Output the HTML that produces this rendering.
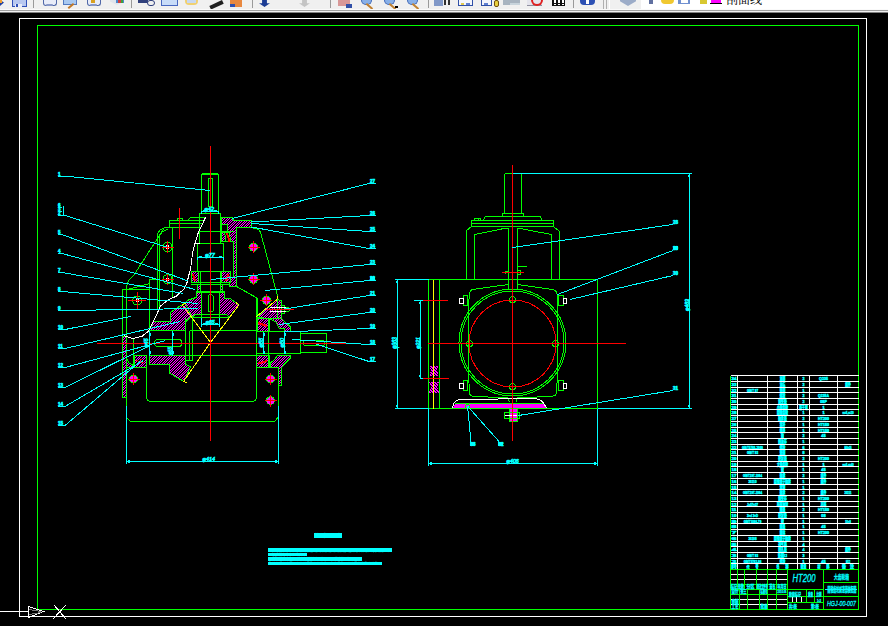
<!DOCTYPE html>
<html lang="zh"><head><meta charset="utf-8"><title>CAD</title>
<style>
html,body{margin:0;padding:0;background:#000;}
body{width:888px;height:626px;overflow:hidden;position:relative;font-family:"Liberation Sans","Noto Sans CJK SC",sans-serif;}
#tb{position:absolute;left:0;top:0;width:888px;height:13px;background:#f0f0f0;overflow:hidden;}
#tb .w{position:absolute;left:641px;top:0;width:247px;height:9px;background:#fff;}
#tb .l1{position:absolute;left:0;top:9px;width:888px;height:1px;background:#fafafa;}
#tb .l2{position:absolute;left:0;top:10px;width:888px;height:1px;background:#a0a0a0;}
#tb .l3{position:absolute;left:0;top:11px;width:888px;height:1px;background:#f0f0f0;}
#tb .l4{position:absolute;left:0;top:12px;width:888px;height:1px;background:#808080;}
#tb .lay{position:absolute;left:726px;top:-7px;font-size:12px;line-height:14px;color:#000;font-family:"Liberation Sans","Noto Serif CJK SC",serif;white-space:nowrap;}
#tb i{position:absolute;display:block;}
svg{position:absolute;left:0;top:0;}
svg text{font-family:"Liberation Sans","Noto Sans CJK SC",sans-serif;}
</style></head><body>
<svg width="888" height="626" viewBox="0 0 888 626" fill="none" stroke-width="1" shape-rendering="crispEdges">
<defs>
<pattern id="h1" width="5" height="5" patternUnits="userSpaceOnUse"><rect width="5" height="5" fill="#000"/><g fill="#ff00ff"><rect x="0" y="0" width="1" height="1"/><rect x="0" y="2" width="1" height="1"/><rect x="1" y="1" width="1" height="1"/><rect x="1" y="4" width="1" height="1"/><rect x="2" y="0" width="1" height="1"/><rect x="2" y="3" width="1" height="1"/><rect x="3" y="2" width="1" height="1"/><rect x="3" y="4" width="1" height="1"/><rect x="4" y="1" width="1" height="1"/><rect x="4" y="3" width="1" height="1"/></g></pattern>
<pattern id="h2" width="3" height="3" patternUnits="userSpaceOnUse"><rect width="3" height="3" fill="#ff00ff"/><rect x="0" y="0" width="1" height="1" fill="#000"/><rect x="1" y="1" width="1" height="1" fill="#000"/><rect x="2" y="2" width="1" height="1" fill="#000"/></pattern>
</defs>
<rect x="19.5" y="18.5" width="847" height="597.5" stroke="#ffffff"/>
<rect x="37.5" y="25.5" width="821" height="584" stroke="#00ff00"/>
<g stroke="#fff">
<line x1="0" y1="611.5" x2="28" y2="611.5"/>
<path d="M28.5 606.5 L43.5 611.5 L28.5 617.5 Z"/>
<line x1="29" y1="609.5" x2="41" y2="611.5" stroke="#777"/>
<line x1="29" y1="614.5" x2="41" y2="612.5" stroke="#777"/>
<line x1="54" y1="605" x2="66" y2="619"/>
<line x1="66" y1="605" x2="53" y2="619"/>
</g>
<g fill="#00ffff" stroke="none">
<rect x="314" y="533" width="28" height="5"/>
<rect x="268" y="548" width="124" height="4"/>
<rect x="268" y="553" width="39" height="3"/>
<rect x="268" y="557" width="94" height="4"/>
<rect x="268" y="562" width="114" height="3"/>
</g>
<text x="328" y="537.2" font-size="4.4" fill="#00ffff" stroke="#00ffff" stroke-width="0" text-anchor="middle" textLength="26">技术要求</text>
<text x="269" y="551.7" font-size="3.3" fill="#00ffff" stroke="#00ffff" stroke-width="0" text-anchor="start" textLength="122">1.装配前所有零件用煤油清洗，滚动轴承用汽油清洗，箱体内不许有任何杂物存在。</text>
<text x="269" y="555.5" font-size="2.6" fill="#00ffff" stroke="#00ffff" stroke-width="0" text-anchor="start" textLength="37">2.啮合侧隙不小于0.16mm。</text>
<text x="269" y="560.4" font-size="3.3" fill="#00ffff" stroke="#00ffff" stroke-width="0" text-anchor="start" textLength="92">3.用涂色法检验斑点，按齿高接触斑点不小于40%，按齿长不小于50%。</text>
<text x="269" y="564.2" font-size="2.6" fill="#00ffff" stroke="#00ffff" stroke-width="0" text-anchor="start" textLength="112">4.减速器剖分面、各接触面及密封处均不允许漏油，剖分面允许涂密封胶。</text>
<g stroke="#00ff00" fill="url(#h1)">
<path d="M221 217.5 L232 217.5 L233.5 220.5 L251.5 220.5 L251.5 227.5 L236.5 227.5 L236.5 286.5 L229 286.5 L229 277.5 L233.5 277.5 L233.5 241.5 L221 241.5 Z"/>
<rect x="191" y="271.5" width="7" height="10.5"/>
<rect x="221" y="271.5" width="9" height="10.5"/>
<rect x="197.5" y="284" width="2.5" height="7"/>
<rect x="220" y="284" width="2.5" height="7"/>
<path d="M219.5 292.5 L224.5 292.5 L224.5 298.5 L230 298.5 L239 305 L229 317.5 L226.5 314.5 L219.5 314.5 Z"/>
<path d="M201 292.5 L196 292.5 L196 297.5 L188.5 300 L182.5 305 L192 317.5 L195 314.5 L201 314.5 Z"/>
<path d="M149.5 330.5 L153.5 321 L170 321 L170 312.8 L178 307.4 L185 303 L191.5 316 L185.5 322 L185.5 330.5 Z"/>
<path d="M149.5 355.5 L185 355.5 L185 363.7 L190.5 367 L184 381.5 L169.5 373.2 L169.5 364.2 L149.5 364.2 Z"/>
<rect x="122.5" y="336" width="4" height="61"/>
<rect x="134.5" y="355.5" width="12" height="11.8"/>
<path d="M126.5 358 L129 363 L133.5 365.5 L133.5 367.3 L126.5 367.3 Z"/>
<path d="M256.5 317.5 L277 299.5 L281.5 300.5 L281.5 318.5 L290 326.5 L290 331 L284 331 L284 328 L279 328 L276 322 L269 318.5 Z"/>
<rect x="256.5" y="318.5" width="12.5" height="13"/>
<rect x="256.5" y="355.5" width="12.5" height="12"/>
<path d="M270 363.5 L274 360 L278 355 L290 355 L290 358.5 L281.5 367.3 L281.5 385.5 L278 385.5 L278 367.3 L270 367.3 Z"/>
</g>
<g stroke="#00ff00" fill="#000">
<rect x="221" y="224.5" width="6" height="7.5"/>
<path d="M224.5 232.5 L229.5 232.5 L230.5 241 L226 241 Z"/>
</g>
<g stroke="#ff0000">
<line x1="226.5" y1="233.5" x2="229" y2="241.5"/>
<line x1="227.5" y1="233.5" x2="230" y2="241.5"/>
<line x1="192.5" y1="274" x2="194.5" y2="281"/>
<line x1="193.5" y1="274" x2="195.5" y2="281"/>
<line x1="228" y1="274" x2="225.5" y2="281"/>
<line x1="229" y1="274" x2="226.5" y2="281"/>
<line x1="258" y1="322.5" x2="267" y2="325.5"/>
<line x1="258" y1="323.5" x2="267" y2="326.5"/>
<line x1="258" y1="363" x2="267" y2="360.5"/>
<line x1="258" y1="364" x2="267" y2="361.5"/>
<line x1="136" y1="360.5" x2="144" y2="363"/>
<line x1="140" y1="359.5" x2="141.5" y2="359.5"/>
</g>
<g stroke="#00ff00">
<path d="M201.5 212.5 L201.5 174.5 L202.5 173.5 L217.5 173.5 L218.5 174.5 L218.5 212.5"/>
<rect x="208.5" y="178" width="4" height="29" rx="2"/>
<line x1="202" y1="174.5" x2="218.5" y2="174.5"/>
<path d="M199.5 243.5 L199.5 213.5 L220.5 213.5 L220.5 243.5"/>
<line x1="199.5" y1="231.5" x2="233.5" y2="231.5"/>
<path d="M194.5 243.5 L223.5 243.5 L223.5 271.5"/>
<line x1="197.5" y1="243.5" x2="197.5" y2="271.5"/>
<line x1="193" y1="271.5" x2="230" y2="271.5"/>
<line x1="200" y1="271.5" x2="200" y2="291"/>
<line x1="220" y1="271.5" x2="220" y2="291"/>
<line x1="191" y1="282" x2="229" y2="282"/>
<line x1="191" y1="284" x2="229" y2="284"/>
<rect x="196" y="291" width="28.5" height="1.5" fill="#00ff00"/>
<line x1="201" y1="292.5" x2="201" y2="317.5"/>
<line x1="219.5" y1="292.5" x2="219.5" y2="317.5"/>
<path d="M208 311 L208 296 L210.5 294 L213 296 L213 311 L210.5 312.5 Z"/>
<line x1="195" y1="314.5" x2="226.5" y2="314.5"/>
<line x1="192" y1="317.5" x2="229" y2="317.5"/>
<path d="M205.5 217.5 L190.5 217.5 L188 220.5"/>
<path d="M204 220.5 L169.5 220.5 L169.5 227.5"/>
<line x1="169.5" y1="223.5" x2="202.5" y2="223.5"/>
<rect x="177.5" y="218.5" width="5" height="2"/>
<line x1="164.5" y1="227.5" x2="200" y2="227.5"/>
<path d="M166.5 227.5 Q158.5 228.5 157.5 235 V308.5"/>
<path d="M168.5 229.5 Q160.5 230.5 159.5 237 V308.5"/>
<line x1="172.5" y1="227.5" x2="172.5" y2="297"/>
<path d="M164.5 227.5 L134 275 Q127.5 280 126.5 287 V406"/>
<path d="M122.5 397 L122.5 289.5 L149.5 289.5"/>
<line x1="122.5" y1="397" x2="126.5" y2="397"/>
<line x1="127.5" y1="289.5" x2="149.5" y2="283.5"/>
<path d="M157.5 279.5 L149.5 279.5 L149.5 330.5"/>
<path d="M251.5 227.5 L257 229 Q260 230 261 234 L277.5 296"/>
<path d="M236.5 286.5 L257 298 L257 331"/>
<path d="M245 291 L256.5 298"/>
<line x1="189.5" y1="330.5" x2="256.5" y2="330.5"/>
<line x1="150" y1="355.5" x2="256.5" y2="355.5"/>
<line x1="185.5" y1="318" x2="185.5" y2="360"/>
<line x1="189.5" y1="330.5" x2="189.5" y2="360"/>
<line x1="192.5" y1="317.5" x2="192.5" y2="360"/>
<line x1="185.5" y1="360" x2="192.5" y2="360"/>
<rect x="149.5" y="330.5" width="35.5" height="25"/>
<rect x="154.5" y="339.5" width="27.5" height="7" rx="3.5"/>
<line x1="133.5" y1="338.5" x2="133.5" y2="367"/>
<line x1="126.5" y1="367.3" x2="146.5" y2="367.3"/>
<path d="M146.5 367.3 V396.5 Q146.5 401.5 151.5 401.5 H251.5 Q256.5 401.5 256.5 396.5 V298"/>
<path d="M126.5 406 L126.5 417.5 L130.5 421.5 L274.5 421.5 L278 417.5 L278 367.3"/>
<line x1="256.5" y1="367.3" x2="278" y2="367.3"/>
<rect x="256.5" y="331.5" width="44" height="22"/>
<line x1="268.5" y1="318.5" x2="268.5" y2="367"/>
<rect x="300.5" y="333.5" width="25.5" height="19"/>
<rect x="303" y="340.5" width="22" height="5" rx="2.5"/>
<line x1="245" y1="330.5" x2="256.5" y2="330.5"/>
<rect x="281.5" y="305" width="3" height="8"/>
<circle cx="287" cy="309.5" r="2.5"/>
<line x1="277.5" y1="300" x2="277.5" y2="318.5"/>
<line x1="256.5" y1="318.5" x2="281.5" y2="318.5"/>
</g>
<g stroke="#ffff00">
<line x1="210.5" y1="342.5" x2="182.5" y2="305"/>
<line x1="210.5" y1="342.5" x2="239" y2="305"/>
<line x1="210.5" y1="342.5" x2="183.5" y2="381.5"/>
<path d="M277.5 296 L277 299.5 L256.5 316.5"/>
<line x1="182.5" y1="305" x2="186.5" y2="302.5"/>
<line x1="239" y1="305" x2="236" y2="302.5"/>
<line x1="183.5" y1="381.5" x2="187" y2="383"/>
</g>
<g stroke="#ffffff">
<path d="M205.5 217.5 L198.5 232 L195 243 L192.7 252 L190.7 268 L187 282.5 L184.4 288.5 L176.3 296.2 L168.2 299.8 L160.5 306 L154.6 319 L148.3 331.3 L142 336.3 L133 338.5 L124 335.8"/>
<line x1="195" y1="243.5" x2="199.5" y2="243.5"/>
<line x1="269.5" y1="307.5" x2="286" y2="307.5"/>
<line x1="269.5" y1="311.5" x2="286" y2="311.5"/>
</g>
<g>
<circle cx="167.5" cy="247" r="4.5" stroke="#00ff00" fill="#000"/><circle cx="167.5" cy="247" r="1.5" stroke="#ffffff" fill="#fff"/><line x1="161.5" y1="247" x2="173.5" y2="247" stroke="#ff0000"/><line x1="167.5" y1="241" x2="167.5" y2="253" stroke="#ff0000"/>
<circle cx="167.5" cy="279.3" r="4.5" stroke="#00ff00" fill="#000"/><circle cx="167.5" cy="279.3" r="1.5" stroke="#ffffff" fill="#fff"/><line x1="161.5" y1="279.3" x2="173.5" y2="279.3" stroke="#ff0000"/><line x1="167.5" y1="273.3" x2="167.5" y2="285.3" stroke="#ff0000"/>
<circle cx="137.3" cy="300.5" r="4.5" stroke="#00ff00" fill="#000"/><circle cx="137.3" cy="300.5" r="1.5" stroke="#ffffff" fill="#fff"/><line x1="128.3" y1="300.5" x2="146.3" y2="300.5" stroke="#ff0000"/><line x1="137.3" y1="291.5" x2="137.3" y2="309.5" stroke="#ff0000"/>
<circle cx="253.5" cy="247.2" r="4" stroke="#00ff00" fill="#ff00ff"/><line x1="247.5" y1="247.2" x2="259.5" y2="247.2" stroke="#ff0000"/><line x1="253.5" y1="241.2" x2="253.5" y2="253.2" stroke="#ff0000"/>
<circle cx="253.5" cy="279.3" r="4" stroke="#00ff00" fill="#ff00ff"/><line x1="247.5" y1="279.3" x2="259.5" y2="279.3" stroke="#ff0000"/><line x1="253.5" y1="273.3" x2="253.5" y2="285.3" stroke="#ff0000"/>
<circle cx="266.4" cy="300.3" r="4" stroke="#00ff00" fill="#ff00ff"/><line x1="260.4" y1="300.3" x2="272.4" y2="300.3" stroke="#ff0000"/><line x1="266.4" y1="294.3" x2="266.4" y2="306.3" stroke="#ff0000"/>
<circle cx="133.5" cy="379" r="4" stroke="#00ff00" fill="#ff00ff"/><line x1="127.5" y1="379" x2="139.5" y2="379" stroke="#ff0000"/><line x1="133.5" y1="373" x2="133.5" y2="385" stroke="#ff0000"/>
<circle cx="270.5" cy="379" r="4" stroke="#00ff00" fill="#ff00ff"/><line x1="264.5" y1="379" x2="276.5" y2="379" stroke="#ff0000"/><line x1="270.5" y1="373" x2="270.5" y2="385" stroke="#ff0000"/>
<circle cx="270.5" cy="400.5" r="4" stroke="#00ff00" fill="#ff00ff"/><line x1="264.5" y1="400.5" x2="276.5" y2="400.5" stroke="#ff0000"/><line x1="270.5" y1="394.5" x2="270.5" y2="406.5" stroke="#ff0000"/>
</g>
<g stroke="#ff0000">
<line x1="210.5" y1="146" x2="210.5" y2="440.5"/>
<line x1="97" y1="343.5" x2="347" y2="343.5"/>
<line x1="179.5" y1="208" x2="179.5" y2="238.5"/>
<line x1="267" y1="309.5" x2="294" y2="309.5"/>
</g>
<g stroke="#00ffff">
<line x1="201.5" y1="211.5" x2="218.5" y2="211.5"/>
<line x1="197.5" y1="257.5" x2="223.5" y2="257.5"/>
<line x1="201" y1="324.5" x2="219.5" y2="324.5"/>
<line x1="201" y1="317.5" x2="201" y2="326"/>
<line x1="219.5" y1="317.5" x2="219.5" y2="326"/>
<line x1="149.5" y1="330.5" x2="149.5" y2="355.5"/>
<line x1="172.5" y1="330.5" x2="172.5" y2="355.5"/>
<line x1="263.5" y1="331.5" x2="263.5" y2="353.5"/>
<line x1="284.5" y1="331.5" x2="284.5" y2="353.5"/>
<line x1="126.5" y1="406" x2="126.5" y2="463.5"/>
<line x1="278" y1="406" x2="278" y2="463.5"/>
<line x1="126.5" y1="461.5" x2="278" y2="461.5"/>
<path d="M58 176.5 L69 176.5 L210 190.5"/>
<path d="M58 215.5 L65 215.5 L166.5 247"/>
<path d="M58 234.5 L62 234.5 L188 281"/>
<path d="M58 253.5 L62 253.5 L195 289.5"/>
<path d="M58 272.5 L62 272.5 L183.5 293.5"/>
<path d="M58 291.5 L62 291.5 L198 303.5"/>
<path d="M58 310.5 L62 310.5 L198 308.5"/>
<path d="M58 329.5 L65 329.5 L131 316.5"/>
<path d="M58 348.5 L65 348.5 L180 321.5"/>
<path d="M58 367.5 L65 367.5 L165.5 340.5"/>
<path d="M58 387.5 L65 387.5 L149 346"/>
<path d="M58 406.5 L65 406.5 L143.5 360.5"/>
<path d="M58 425.5 L65 425.5 L140 361.5"/>
<path d="M376 183.5 L369 183.5 L232 218.5"/>
<path d="M376 215.5 L369 215.5 L251.5 222"/>
<path d="M376 231.5 L369 231.5 L251.5 223.5"/>
<path d="M376 248.5 L369 248.5 L251.5 227"/>
<path d="M376 264.5 L369 264.5 L211 279.5"/>
<path d="M376 280.5 L369 280.5 L265 290.5"/>
<path d="M376 295.5 L369 295.5 L284.5 309"/>
<path d="M376 312.5 L369 312.5 L279 324.5"/>
<path d="M376 328.5 L369 328.5 L284 332"/>
<path d="M376 344.5 L369 344.5 L292.5 339.5"/>
<path d="M376 361.5 L369 361.5 L316 344"/>
<line x1="58" y1="207.5" x2="62" y2="207.5"/>
<line x1="58" y1="211.5" x2="62" y2="211.5"/>
<line x1="63.5" y1="206" x2="63.5" y2="215.5"/>
</g>
<text x="58" y="175.7" font-size="4.5" fill="#00ffff" stroke="#00ffff" stroke-width="0.6" text-anchor="start" font-weight="bold">1</text>
<text x="58" y="214.7" font-size="4.5" fill="#00ffff" stroke="#00ffff" stroke-width="0.6" text-anchor="start" font-weight="bold">2</text>
<text x="58" y="233.7" font-size="4.5" fill="#00ffff" stroke="#00ffff" stroke-width="0.6" text-anchor="start" font-weight="bold">5</text>
<text x="58" y="252.7" font-size="4.5" fill="#00ffff" stroke="#00ffff" stroke-width="0.6" text-anchor="start" font-weight="bold">4</text>
<text x="58" y="271.7" font-size="4.5" fill="#00ffff" stroke="#00ffff" stroke-width="0.6" text-anchor="start" font-weight="bold">7</text>
<text x="58" y="290.7" font-size="4.5" fill="#00ffff" stroke="#00ffff" stroke-width="0.6" text-anchor="start" font-weight="bold">8</text>
<text x="58" y="309.7" font-size="4.5" fill="#00ffff" stroke="#00ffff" stroke-width="0.6" text-anchor="start" font-weight="bold">9</text>
<text x="58" y="328.7" font-size="4.5" fill="#00ffff" stroke="#00ffff" stroke-width="0.6" text-anchor="start" font-weight="bold">10</text>
<text x="58" y="347.7" font-size="4.5" fill="#00ffff" stroke="#00ffff" stroke-width="0.6" text-anchor="start" font-weight="bold">11</text>
<text x="58" y="366.7" font-size="4.5" fill="#00ffff" stroke="#00ffff" stroke-width="0.6" text-anchor="start" font-weight="bold">12</text>
<text x="58" y="386.7" font-size="4.5" fill="#00ffff" stroke="#00ffff" stroke-width="0.6" text-anchor="start" font-weight="bold">13</text>
<text x="58" y="405.7" font-size="4.5" fill="#00ffff" stroke="#00ffff" stroke-width="0.6" text-anchor="start" font-weight="bold">14</text>
<text x="58" y="424.7" font-size="4.5" fill="#00ffff" stroke="#00ffff" stroke-width="0.6" text-anchor="start" font-weight="bold">15</text>
<text x="58" y="210.7" font-size="4.5" fill="#00ffff" stroke="#00ffff" stroke-width="0.6" text-anchor="start" font-weight="bold">3</text>
<text x="58" y="206.7" font-size="4.5" fill="#00ffff" stroke="#00ffff" stroke-width="0.6" text-anchor="start" font-weight="bold">6</text>
<text x="370" y="182.7" font-size="4.5" fill="#00ffff" stroke="#00ffff" stroke-width="0.6" text-anchor="start" font-weight="bold">27</text>
<text x="370" y="214.7" font-size="4.5" fill="#00ffff" stroke="#00ffff" stroke-width="0.6" text-anchor="start" font-weight="bold">26</text>
<text x="370" y="230.7" font-size="4.5" fill="#00ffff" stroke="#00ffff" stroke-width="0.6" text-anchor="start" font-weight="bold">25</text>
<text x="370" y="247.7" font-size="4.5" fill="#00ffff" stroke="#00ffff" stroke-width="0.6" text-anchor="start" font-weight="bold">24</text>
<text x="370" y="263.7" font-size="4.5" fill="#00ffff" stroke="#00ffff" stroke-width="0.6" text-anchor="start" font-weight="bold">23</text>
<text x="370" y="279.7" font-size="4.5" fill="#00ffff" stroke="#00ffff" stroke-width="0.6" text-anchor="start" font-weight="bold">22</text>
<text x="370" y="294.7" font-size="4.5" fill="#00ffff" stroke="#00ffff" stroke-width="0.6" text-anchor="start" font-weight="bold">21</text>
<text x="370" y="311.7" font-size="4.5" fill="#00ffff" stroke="#00ffff" stroke-width="0.6" text-anchor="start" font-weight="bold">20</text>
<text x="370" y="327.7" font-size="4.5" fill="#00ffff" stroke="#00ffff" stroke-width="0.6" text-anchor="start" font-weight="bold">19</text>
<text x="370" y="343.7" font-size="4.5" fill="#00ffff" stroke="#00ffff" stroke-width="0.6" text-anchor="start" font-weight="bold">18</text>
<text x="370" y="360.7" font-size="4.5" fill="#00ffff" stroke="#00ffff" stroke-width="0.6" text-anchor="start" font-weight="bold">17</text>
<text x="209.2" y="211.2" font-size="6" fill="#00ffff" stroke="#00ffff" stroke-width="0.75" text-anchor="middle" font-style="italic" lengthAdjust="spacingAndGlyphs" textLength="9.4">φ42</text>
<text x="210" y="257.1" font-size="6" fill="#00ffff" stroke="#00ffff" stroke-width="0.75" text-anchor="middle" font-style="italic" lengthAdjust="spacingAndGlyphs" textLength="9.4">φ77</text>
<text x="210.2" y="323.6" font-size="6" fill="#00ffff" stroke="#00ffff" stroke-width="0.75" text-anchor="middle" font-style="italic" lengthAdjust="spacingAndGlyphs" textLength="9">φ65</text>
<text x="208.7" y="460.6" font-size="6" fill="#00ffff" stroke="#00ffff" stroke-width="0.75" text-anchor="middle" font-style="italic" lengthAdjust="spacingAndGlyphs" textLength="12.4">φ414</text>
<text x="0" y="0" font-size="5.5" fill="#00ffff" stroke="#00ffff" stroke-width="0.75" text-anchor="middle" font-style="italic" lengthAdjust="spacingAndGlyphs" textLength="9" transform="translate(147.6,343) rotate(-90)">φ45</text>
<text x="0" y="0" font-size="5.5" fill="#00ffff" stroke="#00ffff" stroke-width="0.75" text-anchor="middle" font-style="italic" lengthAdjust="spacingAndGlyphs" textLength="7.5" transform="translate(171.8,351) rotate(-90)">φ55</text>
<text x="0" y="0" font-size="6" fill="#00ffff" stroke="#00ffff" stroke-width="0.75" text-anchor="middle" font-style="italic" lengthAdjust="spacingAndGlyphs" textLength="9.5" transform="translate(262.8,342.8) rotate(-90)">φ55</text>
<text x="0" y="0" font-size="6" fill="#00ffff" stroke="#00ffff" stroke-width="0.75" text-anchor="middle" font-style="italic" lengthAdjust="spacingAndGlyphs" textLength="9.5" transform="translate(283.8,342.8) rotate(-90)">φ50</text>
<g stroke="none" fill="#00ffff">
<rect x="203" y="210" width="3" height="1"/>
<rect x="214" y="210" width="3" height="1"/>
<rect x="201" y="211" width="1" height="3"/>
<rect x="218" y="211" width="1" height="3"/>
<rect x="199" y="256" width="3" height="1"/>
<rect x="219" y="256" width="3" height="1"/>
<rect x="197" y="257" width="1" height="3"/>
<rect x="223" y="257" width="1" height="3"/>
<rect x="203" y="323" width="3" height="1"/>
<rect x="215" y="323" width="3" height="1"/>
<rect x="201" y="324" width="1" height="3"/>
<rect x="219" y="324" width="1" height="3"/>
<rect x="150" y="333" width="1" height="3"/>
<rect x="150" y="351" width="1" height="3"/>
<rect x="173" y="333" width="1" height="3"/>
<rect x="173" y="351" width="1" height="3"/>
<rect x="264" y="333" width="1" height="3"/>
<rect x="264" y="351" width="1" height="3"/>
<rect x="285" y="333" width="1" height="3"/>
<rect x="285" y="351" width="1" height="3"/>
</g>
<rect x="370" y="277" width="5" height="4" fill="#00ffff"/>
<g stroke="none" fill="#ff00ff">
<path d="M452.5 408.5 L455 404 L543.5 404 L547 408.5 Z"/>
<rect x="509" y="408" width="8.5" height="13.5"/>
</g>
<g stroke="none" fill="url(#h2)">
<path d="M429 365.5 L439 365.5 L437 370.5 L439 376 L429 376 L431 370.5 Z"/>
<path d="M429 382 L439 382 L437 387 L439 392.5 L429 392.5 L431 387 Z"/>
</g>
<g stroke="#00ff00">
<path d="M504.5 213.5 L504.5 174.5 L505.5 173.5 L520.5 173.5 L521.5 174.5 L521.5 213.5"/>
<rect x="502.5" y="213.5" width="21" height="3"/>
<path d="M483 220.5 L485.5 216.5 L540 216.5 L542.5 220.5"/>
<path d="M474.5 220.5 L474.5 218.5 L480.5 218.5 L480.5 220.5"/>
<line x1="478.5" y1="218.5" x2="478.5" y2="220.5"/>
<rect x="471.5" y="220.5" width="82" height="6"/>
<line x1="471.5" y1="223.5" x2="553.5" y2="223.5"/>
<path d="M471.5 226.5 L466.5 230.5 L466.5 279.5"/>
<path d="M553.5 226.5 L559.5 231.5 L559.5 279.5"/>
<path d="M474.5 279.5 L474.5 234.5 L504 228.5 L508.5 228.5 L508.5 289"/>
<path d="M551.5 279.5 L551.5 234.5 L520 228.5 L517.5 228.5 L517.5 289"/>
<line x1="517.5" y1="266.5" x2="527" y2="266.5"/>
<path d="M505.5 274 L505.5 271 L508.5 271"/>
<path d="M517.5 270 L520.5 270 L520.5 274 L517.5 274"/>
<line x1="428.5" y1="279.5" x2="597.5" y2="279.5"/>
<line x1="428.5" y1="408.5" x2="597.5" y2="408.5"/>
<line x1="428.5" y1="279.5" x2="428.5" y2="408.5"/>
<line x1="439.5" y1="279.5" x2="439.5" y2="408.5"/>
<line x1="597.5" y1="279.5" x2="597.5" y2="408.5"/>
<circle cx="512.5" cy="342.5" r="53.5"/>
<circle cx="512.5" cy="342.5" r="51.5"/>
<path d="M508.5 284.5 L490 287 L473 289.5 Q470 290 469.5 293.5 L468.5 305 V373 L469.5 393 Q470 396 473.5 396.3 L507.5 398"/>
<path d="M517.5 284.5 L535 287 L552 289.5 Q556.5 290 557 293.5 L557.5 305 V373 L556.5 393 Q556 396 551.5 396.3 L517.5 398"/>
<line x1="507.5" y1="398" x2="509.5" y2="402"/>
<line x1="517.5" y1="398" x2="516" y2="402"/>
<rect x="463.5" y="295.5" width="4" height="10"/>
<rect x="463.5" y="380" width="4" height="10"/>
<rect x="558.5" y="295.5" width="4.5" height="10"/>
<rect x="558.5" y="380" width="4.5" height="10"/>
<circle cx="512.5" cy="299.5" r="3"/>
<circle cx="469.5" cy="343.5" r="3"/>
<circle cx="555.5" cy="343.5" r="3"/>
<circle cx="512.5" cy="386.5" r="3"/>
<line x1="455" y1="403.5" x2="543.5" y2="403.5"/>
<rect x="504.5" y="412.5" width="15" height="6"/>
<rect x="509" y="408.5" width="8.5" height="13"/>
<circle cx="467.5" cy="406.5" r="2"/>
</g>
<line x1="433.5" y1="279.5" x2="433.5" y2="408.5" stroke="#ffff00"/>
<g stroke="#ffffff">
<rect x="459.5" y="298" width="4" height="5"/>
<rect x="459.5" y="383" width="4" height="5"/>
<rect x="563" y="298" width="3" height="5"/>
<rect x="563" y="383" width="3" height="5"/>
<path d="M452.5 408 L454 403 Q456 399.7 460 399.7 H493 L498 399 L520 398.3 L537 399 Q541 399.5 543.5 403 L546.5 408"/>
<line x1="505" y1="415.5" x2="517" y2="415.5"/>
</g>
<g stroke="#ff0000">
<circle cx="512.5" cy="343.5" r="43.5"/>
<line x1="512.5" y1="165" x2="512.5" y2="441"/>
<line x1="428" y1="343.5" x2="626" y2="343.5"/>
<line x1="423" y1="300.5" x2="448" y2="300.5"/>
<line x1="423" y1="378.5" x2="449" y2="378.5"/>
<line x1="502" y1="272.5" x2="524" y2="272.5"/>
</g>
<g stroke="#00ffff">
<line x1="512.5" y1="173.5" x2="692" y2="173.5"/>
<line x1="689.5" y1="173.5" x2="689.5" y2="408.5"/>
<line x1="597.5" y1="408.5" x2="692" y2="408.5"/>
<line x1="395" y1="279.5" x2="428.5" y2="279.5"/>
<line x1="395" y1="408.5" x2="428.5" y2="408.5"/>
<line x1="397.5" y1="279.5" x2="397.5" y2="408.5"/>
<line x1="413.5" y1="300.5" x2="423" y2="300.5"/>
<line x1="420.5" y1="300.5" x2="420.5" y2="378.5"/>
<line x1="420.5" y1="378.5" x2="423" y2="378.5"/>
<line x1="428.5" y1="408.5" x2="428.5" y2="466"/>
<line x1="597.5" y1="408.5" x2="597.5" y2="466"/>
<line x1="428.5" y1="463.5" x2="597.5" y2="463.5"/>
<line x1="673" y1="224.5" x2="512.5" y2="247.5"/>
<line x1="673" y1="250.5" x2="557.5" y2="294.5"/>
<line x1="673" y1="275.5" x2="570" y2="299.5"/>
<line x1="673" y1="390.5" x2="518.5" y2="415.5"/>
<line x1="467.5" y1="406" x2="471" y2="441.5"/>
<line x1="467.5" y1="406" x2="499" y2="441.5"/>
</g>
<g stroke="none" fill="#00ffff">
<rect x="673" y="246" width="5" height="4"/>
<rect x="470" y="442" width="5" height="4"/>
<rect x="498" y="442" width="5" height="4"/>
<rect x="688" y="175" width="1" height="2"/>
<rect x="688" y="405" width="1" height="2"/>
<rect x="396" y="281" width="1" height="2"/>
<rect x="396" y="405" width="1" height="2"/>
<rect x="419" y="302" width="1" height="2"/>
<rect x="419" y="375" width="1" height="2"/>
<rect x="430" y="462" width="2" height="3"/>
<rect x="594" y="462" width="2" height="3"/>
<rect x="128" y="460" width="2" height="3"/>
<rect x="275" y="460" width="2" height="3"/>
</g>
<text x="673" y="224" font-size="4.5" fill="#00ffff" stroke="#00ffff" stroke-width="0.6" text-anchor="start" font-weight="bold">28</text>
<text x="673" y="249.5" font-size="4.5" fill="#00ffff" stroke="#00ffff" stroke-width="0.6" text-anchor="start" font-weight="bold">29</text>
<text x="673" y="275" font-size="4.5" fill="#00ffff" stroke="#00ffff" stroke-width="0.6" text-anchor="start" font-weight="bold">30</text>
<text x="673" y="390" font-size="4.5" fill="#00ffff" stroke="#00ffff" stroke-width="0.6" text-anchor="start" font-weight="bold">31</text>
<text x="470.5" y="445.5" font-size="4.5" fill="#00ffff" stroke="#00ffff" stroke-width="0.6" text-anchor="start" font-weight="bold">33</text>
<text x="498.5" y="445.5" font-size="4.5" fill="#00ffff" stroke="#00ffff" stroke-width="0.6" text-anchor="start" font-weight="bold">32</text>
<text x="512.7" y="462.6" font-size="6" fill="#00ffff" stroke="#00ffff" stroke-width="0.75" text-anchor="middle" font-style="italic" lengthAdjust="spacingAndGlyphs" textLength="12.2">φ406</text>
<text x="0" y="0" font-size="6.5" fill="#00ffff" stroke="#00ffff" stroke-width="0.75" text-anchor="middle" font-style="italic" lengthAdjust="spacingAndGlyphs" textLength="11.7" transform="translate(397.3,343) rotate(-90)">φ363</text>
<text x="0" y="0" font-size="6" fill="#00ffff" stroke="#00ffff" stroke-width="0.75" text-anchor="middle" font-style="italic" lengthAdjust="spacingAndGlyphs" textLength="11.7" transform="translate(420,343) rotate(-90)">φ221</text>
<text x="0" y="0" font-size="6" fill="#00ffff" stroke="#00ffff" stroke-width="0.75" text-anchor="middle" font-style="italic" lengthAdjust="spacingAndGlyphs" textLength="12" transform="translate(688.6,305) rotate(-90)">φ483</text>
<g fill="#00ffff" stroke="#00ffff" stroke-width="0.5" font-size="4.3" text-anchor="middle" font-weight="bold">
<text x="734" y="380.0" textLength="5.0" lengthAdjust="spacingAndGlyphs">34</text>
<text x="782.5" y="380.0" textLength="5.6" lengthAdjust="spacingAndGlyphs">油塞</text>
<text x="803.5" y="380.0" textLength="2.0" lengthAdjust="spacingAndGlyphs">2</text>
<text x="823.5" y="380.0" textLength="8.8" lengthAdjust="spacingAndGlyphs">Q235</text>
<text x="734" y="386.0" textLength="5.0" lengthAdjust="spacingAndGlyphs">33</text>
<text x="782.5" y="386.0" textLength="5.6" lengthAdjust="spacingAndGlyphs">油标</text>
<text x="803.5" y="386.0" textLength="2.0" lengthAdjust="spacingAndGlyphs">2</text>
<text x="848" y="386.0" textLength="5.6" lengthAdjust="spacingAndGlyphs">组件</text>
<text x="734" y="392.0" textLength="5.0" lengthAdjust="spacingAndGlyphs">32</text>
<text x="752.5" y="392.0" textLength="11.2" lengthAdjust="spacingAndGlyphs">GB/T 97</text>
<text x="782.5" y="392.0" textLength="5.6" lengthAdjust="spacingAndGlyphs">垫圈</text>
<text x="803.5" y="392.0" textLength="2.0" lengthAdjust="spacingAndGlyphs">1</text>
<text x="734" y="397.0" textLength="5.0" lengthAdjust="spacingAndGlyphs">31</text>
<text x="782.5" y="397.0" textLength="5.6" lengthAdjust="spacingAndGlyphs">螺栓</text>
<text x="803.5" y="397.0" textLength="2.0" lengthAdjust="spacingAndGlyphs">2</text>
<text x="823.5" y="397.0" textLength="11.0" lengthAdjust="spacingAndGlyphs">Q235A</text>
<text x="734" y="403.0" textLength="5.0" lengthAdjust="spacingAndGlyphs">30</text>
<text x="782.5" y="403.0" textLength="8.4" lengthAdjust="spacingAndGlyphs">调整垫</text>
<text x="803.5" y="403.0" textLength="2.0" lengthAdjust="spacingAndGlyphs">2</text>
<text x="823.5" y="403.0" textLength="6.6" lengthAdjust="spacingAndGlyphs">08F</text>
<text x="734" y="409.0" textLength="5.0" lengthAdjust="spacingAndGlyphs">29</text>
<text x="782.5" y="409.0" textLength="11.2" lengthAdjust="spacingAndGlyphs">小锥齿轮</text>
<text x="803.5" y="409.0" textLength="8.4" lengthAdjust="spacingAndGlyphs">若干组</text>
<text x="823.5" y="409.0" textLength="2.2" lengthAdjust="spacingAndGlyphs">1</text>
<text x="734" y="414.0" textLength="5.0" lengthAdjust="spacingAndGlyphs">28</text>
<text x="782.5" y="414.0" textLength="11.2" lengthAdjust="spacingAndGlyphs">圆锥齿轮</text>
<text x="803.5" y="414.0" textLength="2.0" lengthAdjust="spacingAndGlyphs">1</text>
<text x="823.5" y="414.0" textLength="2.2" lengthAdjust="spacingAndGlyphs">1</text>
<text x="848" y="414.0" textLength="11.2" lengthAdjust="spacingAndGlyphs">m=5,z=20</text>
<text x="734" y="420.0" textLength="5.0" lengthAdjust="spacingAndGlyphs">27</text>
<text x="782.5" y="420.0" textLength="8.4" lengthAdjust="spacingAndGlyphs">轴承盖</text>
<text x="803.5" y="420.0" textLength="2.0" lengthAdjust="spacingAndGlyphs">2</text>
<text x="823.5" y="420.0" textLength="11.0" lengthAdjust="spacingAndGlyphs">HT200</text>
<text x="734" y="426.0" textLength="5.0" lengthAdjust="spacingAndGlyphs">26</text>
<text x="782.5" y="426.0" textLength="5.6" lengthAdjust="spacingAndGlyphs">套杯</text>
<text x="803.5" y="426.0" textLength="2.0" lengthAdjust="spacingAndGlyphs">1</text>
<text x="823.5" y="426.0" textLength="11.0" lengthAdjust="spacingAndGlyphs">HT150</text>
<text x="734" y="432.0" textLength="5.0" lengthAdjust="spacingAndGlyphs">25</text>
<text x="782.5" y="432.0" textLength="5.6" lengthAdjust="spacingAndGlyphs">端盖</text>
<text x="803.5" y="432.0" textLength="2.0" lengthAdjust="spacingAndGlyphs">1</text>
<text x="823.5" y="432.0" textLength="11.0" lengthAdjust="spacingAndGlyphs">HT150</text>
<text x="734" y="437.0" textLength="5.0" lengthAdjust="spacingAndGlyphs">24</text>
<text x="782.5" y="437.0" textLength="2.8" lengthAdjust="spacingAndGlyphs">轴</text>
<text x="803.5" y="437.0" textLength="2.0" lengthAdjust="spacingAndGlyphs">2</text>
<text x="823.5" y="437.0" textLength="4.4" lengthAdjust="spacingAndGlyphs">45</text>
<text x="734" y="443.0" textLength="5.0" lengthAdjust="spacingAndGlyphs">23</text>
<text x="782.5" y="443.0" textLength="8.4" lengthAdjust="spacingAndGlyphs">挡油环</text>
<text x="803.5" y="443.0" textLength="2.0" lengthAdjust="spacingAndGlyphs">1</text>
<text x="734" y="449.0" textLength="5.0" lengthAdjust="spacingAndGlyphs">22</text>
<text x="752.5" y="449.0" textLength="20.8" lengthAdjust="spacingAndGlyphs">GB/T5783-2000</text>
<text x="782.5" y="449.0" textLength="5.6" lengthAdjust="spacingAndGlyphs">螺栓</text>
<text x="803.5" y="449.0" textLength="2.0" lengthAdjust="spacingAndGlyphs">6</text>
<text x="848" y="449.0" textLength="7.0" lengthAdjust="spacingAndGlyphs">M8×25</text>
<text x="734" y="454.0" textLength="5.0" lengthAdjust="spacingAndGlyphs">21</text>
<text x="752.5" y="454.0" textLength="11.2" lengthAdjust="spacingAndGlyphs">GB/T 93</text>
<text x="782.5" y="454.0" textLength="5.6" lengthAdjust="spacingAndGlyphs">垫圈</text>
<text x="803.5" y="454.0" textLength="2.0" lengthAdjust="spacingAndGlyphs">8</text>
<text x="734" y="460.0" textLength="5.0" lengthAdjust="spacingAndGlyphs">20</text>
<text x="782.5" y="460.0" textLength="8.4" lengthAdjust="spacingAndGlyphs">密封盖</text>
<text x="803.5" y="460.0" textLength="2.0" lengthAdjust="spacingAndGlyphs">2</text>
<text x="823.5" y="460.0" textLength="11.0" lengthAdjust="spacingAndGlyphs">HT200</text>
<text x="734" y="466.0" textLength="5.0" lengthAdjust="spacingAndGlyphs">19</text>
<text x="782.5" y="466.0" textLength="11.2" lengthAdjust="spacingAndGlyphs">大锥齿轮</text>
<text x="803.5" y="466.0" textLength="2.0" lengthAdjust="spacingAndGlyphs">1</text>
<text x="823.5" y="466.0" textLength="2.2" lengthAdjust="spacingAndGlyphs">1</text>
<text x="848" y="466.0" textLength="11.2" lengthAdjust="spacingAndGlyphs">m=5,z=40</text>
<text x="734" y="471.0" textLength="5.0" lengthAdjust="spacingAndGlyphs">18</text>
<text x="782.5" y="471.0" textLength="2.8" lengthAdjust="spacingAndGlyphs">键</text>
<text x="803.5" y="471.0" textLength="2.0" lengthAdjust="spacingAndGlyphs">1</text>
<text x="823.5" y="471.0" textLength="4.4" lengthAdjust="spacingAndGlyphs">45</text>
<text x="734" y="477.0" textLength="5.0" lengthAdjust="spacingAndGlyphs">17</text>
<text x="752.5" y="477.0" textLength="19.2" lengthAdjust="spacingAndGlyphs">GB/T297-1994</text>
<text x="782.5" y="477.0" textLength="5.6" lengthAdjust="spacingAndGlyphs">轴承</text>
<text x="803.5" y="477.0" textLength="2.0" lengthAdjust="spacingAndGlyphs">2</text>
<text x="823.5" y="477.0" textLength="5.6" lengthAdjust="spacingAndGlyphs">组件</text>
<text x="734" y="483.0" textLength="5.0" lengthAdjust="spacingAndGlyphs">16</text>
<text x="752.5" y="483.0" textLength="8.0" lengthAdjust="spacingAndGlyphs">30210</text>
<text x="782.5" y="483.0" textLength="16.8" lengthAdjust="spacingAndGlyphs">圆锥滚子轴承</text>
<text x="803.5" y="483.0" textLength="2.0" lengthAdjust="spacingAndGlyphs">1</text>
<text x="823.5" y="483.0" textLength="5.6" lengthAdjust="spacingAndGlyphs">组件</text>
<text x="734" y="489.0" textLength="5.0" lengthAdjust="spacingAndGlyphs">15</text>
<text x="782.5" y="489.0" textLength="5.6" lengthAdjust="spacingAndGlyphs">套筒</text>
<text x="803.5" y="489.0" textLength="2.0" lengthAdjust="spacingAndGlyphs">1</text>
<text x="734" y="494.0" textLength="5.0" lengthAdjust="spacingAndGlyphs">14</text>
<text x="752.5" y="494.0" textLength="19.2" lengthAdjust="spacingAndGlyphs">GB/T297-1994</text>
<text x="782.5" y="494.0" textLength="5.6" lengthAdjust="spacingAndGlyphs">轴承</text>
<text x="803.5" y="494.0" textLength="2.0" lengthAdjust="spacingAndGlyphs">2</text>
<text x="823.5" y="494.0" textLength="5.6" lengthAdjust="spacingAndGlyphs">组件</text>
<text x="848" y="494.0" textLength="7.0" lengthAdjust="spacingAndGlyphs">30211</text>
<text x="734" y="500.0" textLength="5.0" lengthAdjust="spacingAndGlyphs">13</text>
<text x="782.5" y="500.0" textLength="8.4" lengthAdjust="spacingAndGlyphs">调整环</text>
<text x="803.5" y="500.0" textLength="2.0" lengthAdjust="spacingAndGlyphs">1</text>
<text x="823.5" y="500.0" textLength="11.0" lengthAdjust="spacingAndGlyphs">HT200</text>
<text x="734" y="506.0" textLength="5.0" lengthAdjust="spacingAndGlyphs">12</text>
<text x="752.5" y="506.0" textLength="11.2" lengthAdjust="spacingAndGlyphs">J=57×37</text>
<text x="782.5" y="506.0" textLength="11.2" lengthAdjust="spacingAndGlyphs">毡圈油封</text>
<text x="803.5" y="506.0" textLength="2.0" lengthAdjust="spacingAndGlyphs">1</text>
<text x="823.5" y="506.0" textLength="5.6" lengthAdjust="spacingAndGlyphs">毛毡</text>
<text x="734" y="511.0" textLength="5.0" lengthAdjust="spacingAndGlyphs">11</text>
<text x="782.5" y="511.0" textLength="5.6" lengthAdjust="spacingAndGlyphs">端盖</text>
<text x="803.5" y="511.0" textLength="2.0" lengthAdjust="spacingAndGlyphs">2</text>
<text x="823.5" y="511.0" textLength="11.0" lengthAdjust="spacingAndGlyphs">HT150</text>
<text x="734" y="517.0" textLength="5.0" lengthAdjust="spacingAndGlyphs">10</text>
<text x="752.5" y="517.0" textLength="11.2" lengthAdjust="spacingAndGlyphs">3×d 3×D</text>
<text x="782.5" y="517.0" textLength="8.4" lengthAdjust="spacingAndGlyphs">密封垫</text>
<text x="803.5" y="517.0" textLength="2.0" lengthAdjust="spacingAndGlyphs">1</text>
<text x="823.5" y="517.0" textLength="4.4" lengthAdjust="spacingAndGlyphs">08</text>
<text x="734" y="523.0" textLength="5.0" lengthAdjust="spacingAndGlyphs">9</text>
<text x="752.5" y="523.0" textLength="17.6" lengthAdjust="spacingAndGlyphs">GB/T1096-79</text>
<text x="782.5" y="523.0" textLength="2.8" lengthAdjust="spacingAndGlyphs">键</text>
<text x="803.5" y="523.0" textLength="2.0" lengthAdjust="spacingAndGlyphs">1</text>
<text x="848" y="523.0" textLength="5.6" lengthAdjust="spacingAndGlyphs">10×8</text>
<text x="734" y="528.0" textLength="5.0" lengthAdjust="spacingAndGlyphs">8</text>
<text x="782.5" y="528.0" textLength="5.6" lengthAdjust="spacingAndGlyphs">箱盖</text>
<text x="803.5" y="528.0" textLength="2.0" lengthAdjust="spacingAndGlyphs">1</text>
<text x="823.5" y="528.0" textLength="4.4" lengthAdjust="spacingAndGlyphs">45</text>
<text x="734" y="534.0" textLength="5.0" lengthAdjust="spacingAndGlyphs">7</text>
<text x="782.5" y="534.0" textLength="5.6" lengthAdjust="spacingAndGlyphs">箱体</text>
<text x="803.5" y="534.0" textLength="2.0" lengthAdjust="spacingAndGlyphs">1</text>
<text x="823.5" y="534.0" textLength="11.0" lengthAdjust="spacingAndGlyphs">HT200</text>
<text x="734" y="540.0" textLength="5.0" lengthAdjust="spacingAndGlyphs">6</text>
<text x="752.5" y="540.0" textLength="8.0" lengthAdjust="spacingAndGlyphs">30208</text>
<text x="782.5" y="540.0" textLength="16.8" lengthAdjust="spacingAndGlyphs">圆锥滚子轴承</text>
<text x="803.5" y="540.0" textLength="2.0" lengthAdjust="spacingAndGlyphs">1</text>
<text x="734" y="546.0" textLength="5.0" lengthAdjust="spacingAndGlyphs">5</text>
<text x="782.5" y="546.0" textLength="8.4" lengthAdjust="spacingAndGlyphs">通气器</text>
<text x="803.5" y="546.0" textLength="2.0" lengthAdjust="spacingAndGlyphs">4</text>
<text x="734" y="551.0" textLength="5.0" lengthAdjust="spacingAndGlyphs">4</text>
<text x="782.5" y="551.0" textLength="8.4" lengthAdjust="spacingAndGlyphs">视孔盖</text>
<text x="803.5" y="551.0" textLength="2.0" lengthAdjust="spacingAndGlyphs">4</text>
<text x="848" y="551.0" textLength="5.6" lengthAdjust="spacingAndGlyphs">组件</text>
<text x="734" y="557.0" textLength="5.0" lengthAdjust="spacingAndGlyphs">3</text>
<text x="752.5" y="557.0" textLength="11.2" lengthAdjust="spacingAndGlyphs">GB/T 93</text>
<text x="782.5" y="557.0" textLength="9.0" lengthAdjust="spacingAndGlyphs">垫圈12</text>
<text x="803.5" y="557.0" textLength="2.0" lengthAdjust="spacingAndGlyphs">3</text>
<text x="734" y="563.0" textLength="5.0" lengthAdjust="spacingAndGlyphs">2</text>
<text x="752.5" y="563.0" textLength="17.6" lengthAdjust="spacingAndGlyphs">GB/T5782-86</text>
<text x="782.5" y="563.0" textLength="5.6" lengthAdjust="spacingAndGlyphs">螺栓</text>
<text x="803.5" y="563.0" textLength="2.0" lengthAdjust="spacingAndGlyphs">1</text>
<text x="823.5" y="563.0" textLength="4.4" lengthAdjust="spacingAndGlyphs">45</text>
<text x="848" y="563.0" textLength="4.2" lengthAdjust="spacingAndGlyphs">M12</text>
<text x="734" y="568.0" textLength="5.6" lengthAdjust="spacingAndGlyphs">序号</text>
<text x="752.5" y="568.0" textLength="12.0" lengthAdjust="spacingAndGlyphs">代　　号</text>
<text x="782.5" y="568.0" textLength="12.0" lengthAdjust="spacingAndGlyphs">名　　称</text>
<text x="803.5" y="568.0" textLength="5.6" lengthAdjust="spacingAndGlyphs">数量</text>
<text x="823.5" y="568.0" textLength="12.0" lengthAdjust="spacingAndGlyphs">材　　料</text>
<text x="848" y="568.0" textLength="12.0" lengthAdjust="spacingAndGlyphs">备　注</text>
</g>
<g stroke="#ffffff">
<line x1="730.5" y1="375.5" x2="858.5" y2="375.5"/>
<line x1="730.5" y1="381.5" x2="858.5" y2="381.5"/>
<line x1="730.5" y1="387.5" x2="858.5" y2="387.5"/>
<line x1="730.5" y1="392.5" x2="858.5" y2="392.5"/>
<line x1="730.5" y1="398.5" x2="858.5" y2="398.5"/>
<line x1="730.5" y1="404.5" x2="858.5" y2="404.5"/>
<line x1="730.5" y1="409.5" x2="858.5" y2="409.5"/>
<line x1="730.5" y1="415.5" x2="858.5" y2="415.5"/>
<line x1="730.5" y1="421.5" x2="858.5" y2="421.5"/>
<line x1="730.5" y1="427.5" x2="858.5" y2="427.5"/>
<line x1="730.5" y1="432.5" x2="858.5" y2="432.5"/>
<line x1="730.5" y1="438.5" x2="858.5" y2="438.5"/>
<line x1="730.5" y1="444.5" x2="858.5" y2="444.5"/>
<line x1="730.5" y1="449.5" x2="858.5" y2="449.5"/>
<line x1="730.5" y1="455.5" x2="858.5" y2="455.5"/>
<line x1="730.5" y1="461.5" x2="858.5" y2="461.5"/>
<line x1="730.5" y1="466.5" x2="858.5" y2="466.5"/>
<line x1="730.5" y1="472.5" x2="858.5" y2="472.5"/>
<line x1="730.5" y1="478.5" x2="858.5" y2="478.5"/>
<line x1="730.5" y1="484.5" x2="858.5" y2="484.5"/>
<line x1="730.5" y1="489.5" x2="858.5" y2="489.5"/>
<line x1="730.5" y1="495.5" x2="858.5" y2="495.5"/>
<line x1="730.5" y1="501.5" x2="858.5" y2="501.5"/>
<line x1="730.5" y1="506.5" x2="858.5" y2="506.5"/>
<line x1="730.5" y1="512.5" x2="858.5" y2="512.5"/>
<line x1="730.5" y1="518.5" x2="858.5" y2="518.5"/>
<line x1="730.5" y1="523.5" x2="858.5" y2="523.5"/>
<line x1="730.5" y1="529.5" x2="858.5" y2="529.5"/>
<line x1="730.5" y1="535.5" x2="858.5" y2="535.5"/>
<line x1="730.5" y1="541.5" x2="858.5" y2="541.5"/>
<line x1="730.5" y1="546.5" x2="858.5" y2="546.5"/>
<line x1="730.5" y1="552.5" x2="858.5" y2="552.5"/>
<line x1="730.5" y1="558.5" x2="858.5" y2="558.5"/>
<line x1="730.5" y1="563.5" x2="858.5" y2="563.5"/>
<line x1="737.5" y1="375.5" x2="737.5" y2="569.5"/>
<line x1="767.5" y1="375.5" x2="767.5" y2="569.5"/>
<line x1="797.5" y1="375.5" x2="797.5" y2="569.5"/>
<line x1="809.5" y1="375.5" x2="809.5" y2="569.5"/>
<line x1="837.5" y1="375.5" x2="837.5" y2="569.5"/>
<line x1="730.5" y1="574.5" x2="787.5" y2="574.5"/>
<line x1="730.5" y1="579.5" x2="787.5" y2="579.5"/>
<line x1="730.5" y1="599.5" x2="787.5" y2="599.5"/>
<line x1="730.5" y1="604.5" x2="787.5" y2="604.5"/>
<line x1="792.5" y1="597" x2="792.5" y2="602.5"/>
<line x1="796.5" y1="597" x2="796.5" y2="602.5"/>
<line x1="801.5" y1="597" x2="801.5" y2="602.5"/>
</g>
<g stroke="#00ff00">
<line x1="730.5" y1="375.5" x2="730.5" y2="609.5"/>
<line x1="730.5" y1="569.5" x2="858.5" y2="569.5"/>
<line x1="737.5" y1="569.5" x2="737.5" y2="589.5"/>
<line x1="744.5" y1="569.5" x2="744.5" y2="589.5"/>
<line x1="756.5" y1="569.5" x2="756.5" y2="589.5"/>
<line x1="767.5" y1="569.5" x2="767.5" y2="589.5"/>
<line x1="776.5" y1="569.5" x2="776.5" y2="589.5"/>
<line x1="787.5" y1="569.5" x2="787.5" y2="609.5"/>
<line x1="823.5" y1="569.5" x2="823.5" y2="609.5"/>
<line x1="730.5" y1="589.5" x2="823.5" y2="589.5"/>
<line x1="730.5" y1="594.5" x2="787.5" y2="594.5"/>
<line x1="730.5" y1="584.5" x2="787.5" y2="584.5"/>
<line x1="739.5" y1="589.5" x2="739.5" y2="609.5"/>
<line x1="747.5" y1="589.5" x2="747.5" y2="609.5"/>
<line x1="759.5" y1="589.5" x2="759.5" y2="609.5"/>
<line x1="767.5" y1="589.5" x2="767.5" y2="609.5"/>
<line x1="776.5" y1="589.5" x2="776.5" y2="609.5"/>
<line x1="806.5" y1="589.5" x2="806.5" y2="602.5"/>
<line x1="814.5" y1="589.5" x2="814.5" y2="602.5"/>
<line x1="806.5" y1="596.5" x2="823.5" y2="596.5"/>
<line x1="787.5" y1="602.5" x2="823.5" y2="602.5"/>
<line x1="787.5" y1="596.5" x2="806.5" y2="596.5"/>
<line x1="823.5" y1="582.5" x2="858.5" y2="582.5"/>
<line x1="823.5" y1="596.5" x2="858.5" y2="596.5"/>
</g>
<g fill="#00ffff" stroke="#00ffff" stroke-width="0.3" text-anchor="middle">
<text x="804" y="581.5" font-size="10" font-style="italic" textLength="23" lengthAdjust="spacingAndGlyphs">HT200</text>
<text x="841.5" y="578.7" font-size="6" font-weight="bold" textLength="15" lengthAdjust="spacingAndGlyphs">大齿轮箱</text>
<text x="842" y="592.3" font-size="6.5" font-weight="bold" textLength="29" lengthAdjust="spacingAndGlyphs">圆锥齿轮减速器装配图</text>
<text x="841.5" y="606" font-size="7.5" font-style="italic" textLength="29" lengthAdjust="spacingAndGlyphs">HGJ-00-007</text>
<text x="734" y="588.3" font-size="4.2" font-weight="bold" textLength="6" lengthAdjust="spacingAndGlyphs">标记</text>
<text x="741" y="588.3" font-size="4.2" font-weight="bold" textLength="6" lengthAdjust="spacingAndGlyphs">处数</text>
<text x="750.5" y="588.3" font-size="4.2" font-weight="bold" textLength="8" lengthAdjust="spacingAndGlyphs">分区</text>
<text x="762.5" y="588.3" font-size="4.2" font-weight="bold" textLength="11" lengthAdjust="spacingAndGlyphs">更改文件号</text>
<text x="772.5" y="588.3" font-size="4.2" font-weight="bold" textLength="6" lengthAdjust="spacingAndGlyphs">签名</text>
<text x="782" y="588.3" font-size="4.2" font-weight="bold" textLength="9" lengthAdjust="spacingAndGlyphs">年月日</text>
<text x="735" y="593.3" font-size="4.2" font-weight="bold" textLength="7" lengthAdjust="spacingAndGlyphs">设计</text>
<text x="743.5" y="593.3" font-size="4.2" font-weight="bold" textLength="6" lengthAdjust="spacingAndGlyphs">张三</text>
<text x="764" y="593.3" font-size="4.2" font-weight="bold" textLength="7" lengthAdjust="spacingAndGlyphs">标准化</text>
<text x="782" y="593.3" font-size="4.2" font-weight="bold" textLength="9" lengthAdjust="spacingAndGlyphs">2010.06</text>
<text x="735" y="603.3" font-size="4.2" font-weight="bold" textLength="7" lengthAdjust="spacingAndGlyphs">审核</text>
<text x="735" y="608.3" font-size="4.2" font-weight="bold" textLength="7" lengthAdjust="spacingAndGlyphs">工艺</text>
<text x="764" y="608.3" font-size="4.2" font-weight="bold" textLength="7" lengthAdjust="spacingAndGlyphs">批准</text>
<text x="795" y="595.6" font-size="4.2" font-weight="bold" textLength="12" lengthAdjust="spacingAndGlyphs">阶段标记</text>
<text x="810.5" y="595.6" font-size="4.2" font-weight="bold" textLength="5" lengthAdjust="spacingAndGlyphs">重量</text>
<text x="819" y="595.6" font-size="4.2" font-weight="bold" textLength="5" lengthAdjust="spacingAndGlyphs">比例</text>
<text x="819" y="601.6" font-size="4.2" font-weight="bold" textLength="4" lengthAdjust="spacingAndGlyphs">1:2</text>
<text x="793" y="608.3" font-size="4.2" font-weight="bold" textLength="8" lengthAdjust="spacingAndGlyphs">共1张</text>
<text x="815" y="608.3" font-size="4.2" font-weight="bold" textLength="8" lengthAdjust="spacingAndGlyphs">第1张</text>
</g>
<line x1="825" y1="589.5" x2="857" y2="589.5" stroke="#00ffff"/>
</svg>
<div id="tb"><div class="w"></div>
<i style="left:0px;top:0px;width:4px;height:6px;background:#2040a0;clip-path:polygon(0 0,100% 40%,0 100%)"></i>
<i style="left:0px;top:0px;width:2px;height:3px;background:#f0a030;"></i>
<i style="left:12px;top:0px;width:13px;height:6px;background:#b8c8f0;border:1px solid #3050b8;border-top:0;box-sizing:content-box"></i>
<i style="left:15px;top:4px;width:7px;height:3px;background:#e8ecf8;"></i>
<i style="left:16px;top:4px;width:2px;height:3px;background:#3050b8;"></i>
<i style="left:33px;top:0px;width:1px;height:8px;background:#9a9a9a;"></i>
<i style="left:43px;top:0px;width:12px;height:5px;background:#e8ecf8;border:1px solid #5068a8;border-top:0;border-radius:0 0 3px 3px"></i>
<i style="left:46px;top:4px;width:7px;height:2px;background:#8898c8;border-radius:2px"></i>
<i style="left:63px;top:0px;width:12px;height:4px;background:#a8c8f0;border:1px solid #5078c0;border-top:0"></i>
<i style="left:66px;top:3px;width:7px;height:2px;background:#c07828;transform:rotate(-40deg);transform-origin:100% 0"></i>
<i style="left:87px;top:0px;width:12px;height:5px;background:#e8ecf8;border:1px solid #5068a8;border-top:0;border-radius:0 0 3px 3px"></i>
<i style="left:90px;top:4px;width:7px;height:2px;background:#8898c8;border-radius:2px"></i>
<i style="left:91px;top:0px;width:4px;height:3px;background:#d8a020;"></i>
<i style="left:110px;top:0px;width:14px;height:5px;background:#e0e4ec;clip-path:polygon(0 0,100% 0,100% 30%,50% 100%,0 30%)"></i>
<i style="left:116px;top:0px;width:8px;height:3px;background:#4a8ad0;"></i>
<i style="left:118px;top:0px;width:3px;height:3px;background:#d04040;"></i>
<i style="left:121px;top:0px;width:2px;height:3px;background:#40a040;"></i>
<i style="left:131px;top:0px;width:1px;height:8px;background:#9a9a9a;"></i>
<i style="left:138px;top:0px;width:10px;height:3px;background:#30407c;"></i>
<i style="left:147px;top:0px;width:6px;height:4px;background:#f0f0f0;border:1px solid #30407c;border-radius:3px"></i>
<i style="left:161px;top:0px;width:15px;height:5px;background:#c8dcf8;border:1px solid #4868c0;border-top:0"></i>
<i style="left:185px;top:0px;width:13px;height:5px;background:#f0d070;border-radius:0 0 4px 4px"></i>
<i style="left:187px;top:0px;width:9px;height:3px;background:#c8d8f0;"></i>
<i style="left:208px;top:0px;width:14px;height:4px;background:#202020;transform:rotate(-25deg);transform-origin:100% 0"></i>
<i style="left:230px;top:0px;width:12px;height:7px;background:#e88840;"></i>
<i style="left:230px;top:4px;width:5px;height:3px;background:#3050b0;"></i>
<i style="left:252px;top:0px;width:1px;height:8px;background:#9a9a9a;"></i>
<i style="left:259px;top:0px;width:11px;height:7px;background:#1c3c94;clip-path:polygon(0 45%,28% 45%,28% 0,72% 0,72% 45%,100% 45%,50% 100%)"></i>
<i style="left:299px;top:0px;width:11px;height:7px;background:#c4c4c4;clip-path:polygon(0 45%,28% 45%,28% 0,72% 0,72% 45%,100% 45%,50% 100%)"></i>
<i style="left:330px;top:0px;width:1px;height:8px;background:#9a9a9a;"></i>
<i style="left:338px;top:0px;width:12px;height:6px;background:#d89898;"></i>
<i style="left:346px;top:4px;width:6px;height:4px;background:#3050a8;"></i>
<i style="left:361px;top:0px;width:9px;height:4px;background:#88b0e8;border-radius:0 0 5px 5px;border:1px solid #4068b8;border-top:0"></i>
<i style="left:367px;top:3px;width:8px;height:2px;background:#c08030;transform:rotate(40deg);transform-origin:0 0"></i>
<i style="left:384px;top:0px;width:9px;height:4px;background:#88b0e8;border-radius:0 0 5px 5px;border:1px solid #4068b8;border-top:0"></i>
<i style="left:390px;top:3px;width:8px;height:2px;background:#c08030;transform:rotate(40deg);transform-origin:0 0"></i>
<i style="left:407px;top:0px;width:9px;height:4px;background:#88b0e8;border-radius:0 0 5px 5px;border:1px solid #4068b8;border-top:0"></i>
<i style="left:413px;top:3px;width:8px;height:2px;background:#c08030;transform:rotate(40deg);transform-origin:0 0"></i>
<i style="left:395px;top:6px;width:3px;height:2px;background:#000;"></i>
<i style="left:428px;top:0px;width:1px;height:8px;background:#9a9a9a;"></i>
<i style="left:434px;top:0px;width:9px;height:6px;background:#8098c8;"></i>
<i style="left:444px;top:0px;width:2px;height:5px;background:#303030;"></i>
<i style="left:448px;top:0px;width:2px;height:5px;background:#303030;"></i>
<i style="left:458px;top:0px;width:13px;height:5px;background:#f4f6fc;border:1px solid #3050a8;border-top:0"></i>
<i style="left:461px;top:3px;width:3px;height:2px;background:#e0c850;"></i>
<i style="left:466px;top:3px;width:4px;height:2px;background:#6080d0;"></i>
<i style="left:481px;top:0px;width:9px;height:5px;background:#f4f6fc;border:1px solid #3050a8;border-top:0"></i>
<i style="left:484px;top:3px;width:4px;height:2px;background:#6080d0;"></i>
<i style="left:494px;top:0px;width:3px;height:5px;background:#e8d040;border:1px solid #705010;border-radius:2px"></i>
<i style="left:503px;top:0px;width:17px;height:5px;background:#a8b4c0;"></i>
<i style="left:510px;top:3px;width:10px;height:2px;background:#c8d4dc;"></i>
<i style="left:527px;top:0px;width:15px;height:5px;background:#e4e4ec;border-bottom:1px solid #9090a0"></i>
<i style="left:531px;top:0px;width:8px;height:4px;background:transparent;border:2px solid #e02020;border-top:0;border-radius:0 0 6px 6px"></i>
<i style="left:552px;top:0px;width:13px;height:6px;background:#101010;"></i>
<i style="left:554px;top:0px;width:2px;height:3px;background:#fff;"></i>
<i style="left:558px;top:0px;width:2px;height:3px;background:#fff;"></i>
<i style="left:562px;top:0px;width:2px;height:3px;background:#fff;"></i>
<i style="left:554px;top:4px;width:2px;height:1px;background:#fff;"></i>
<i style="left:558px;top:4px;width:2px;height:1px;background:#fff;"></i>
<i style="left:562px;top:4px;width:2px;height:1px;background:#fff;"></i>
<i style="left:573px;top:0px;width:1px;height:8px;background:#9a9a9a;"></i>
<i style="left:580px;top:0px;width:15px;height:5px;background:#2c50b4;border-radius:0 0 4px 4px"></i>
<i style="left:586px;top:0px;width:3px;height:4px;background:#fff;"></i>
<i style="left:603px;top:0px;width:1px;height:9px;background:#b0b0b0;"></i>
<i style="left:606px;top:0px;width:1px;height:9px;background:#b0b0b0;"></i>
<i style="left:609px;top:0px;width:1px;height:9px;background:#fff;"></i>
<i style="left:620px;top:0px;width:16px;height:6px;background:#9cacc8;clip-path:polygon(0 0,100% 0,100% 20%,50% 100%,0 20%)"></i>
<i style="left:649px;top:0px;width:4px;height:4px;background:#6070a0;"></i>
<i style="left:661px;top:0px;width:13px;height:4px;background:#f0c830;border-radius:0 0 6px 6px"></i>
<i style="left:678px;top:0px;width:12px;height:4px;background:#7090d0;"></i>
<i style="left:681px;top:0px;width:7px;height:3px;background:#fff;"></i>
<i style="left:700px;top:0px;width:7px;height:4px;background:#d8c830;"></i>
<i style="left:711px;top:0px;width:10px;height:3px;background:#ff00ff;"></i>
<i style="left:710px;top:3px;width:12px;height:1px;background:#000;"></i>
<div class="l1"></div><div class="l2"></div><div class="l3"></div><div class="l4"></div>
<span class="lay">剖面线</span>
</div>
</body></html>
